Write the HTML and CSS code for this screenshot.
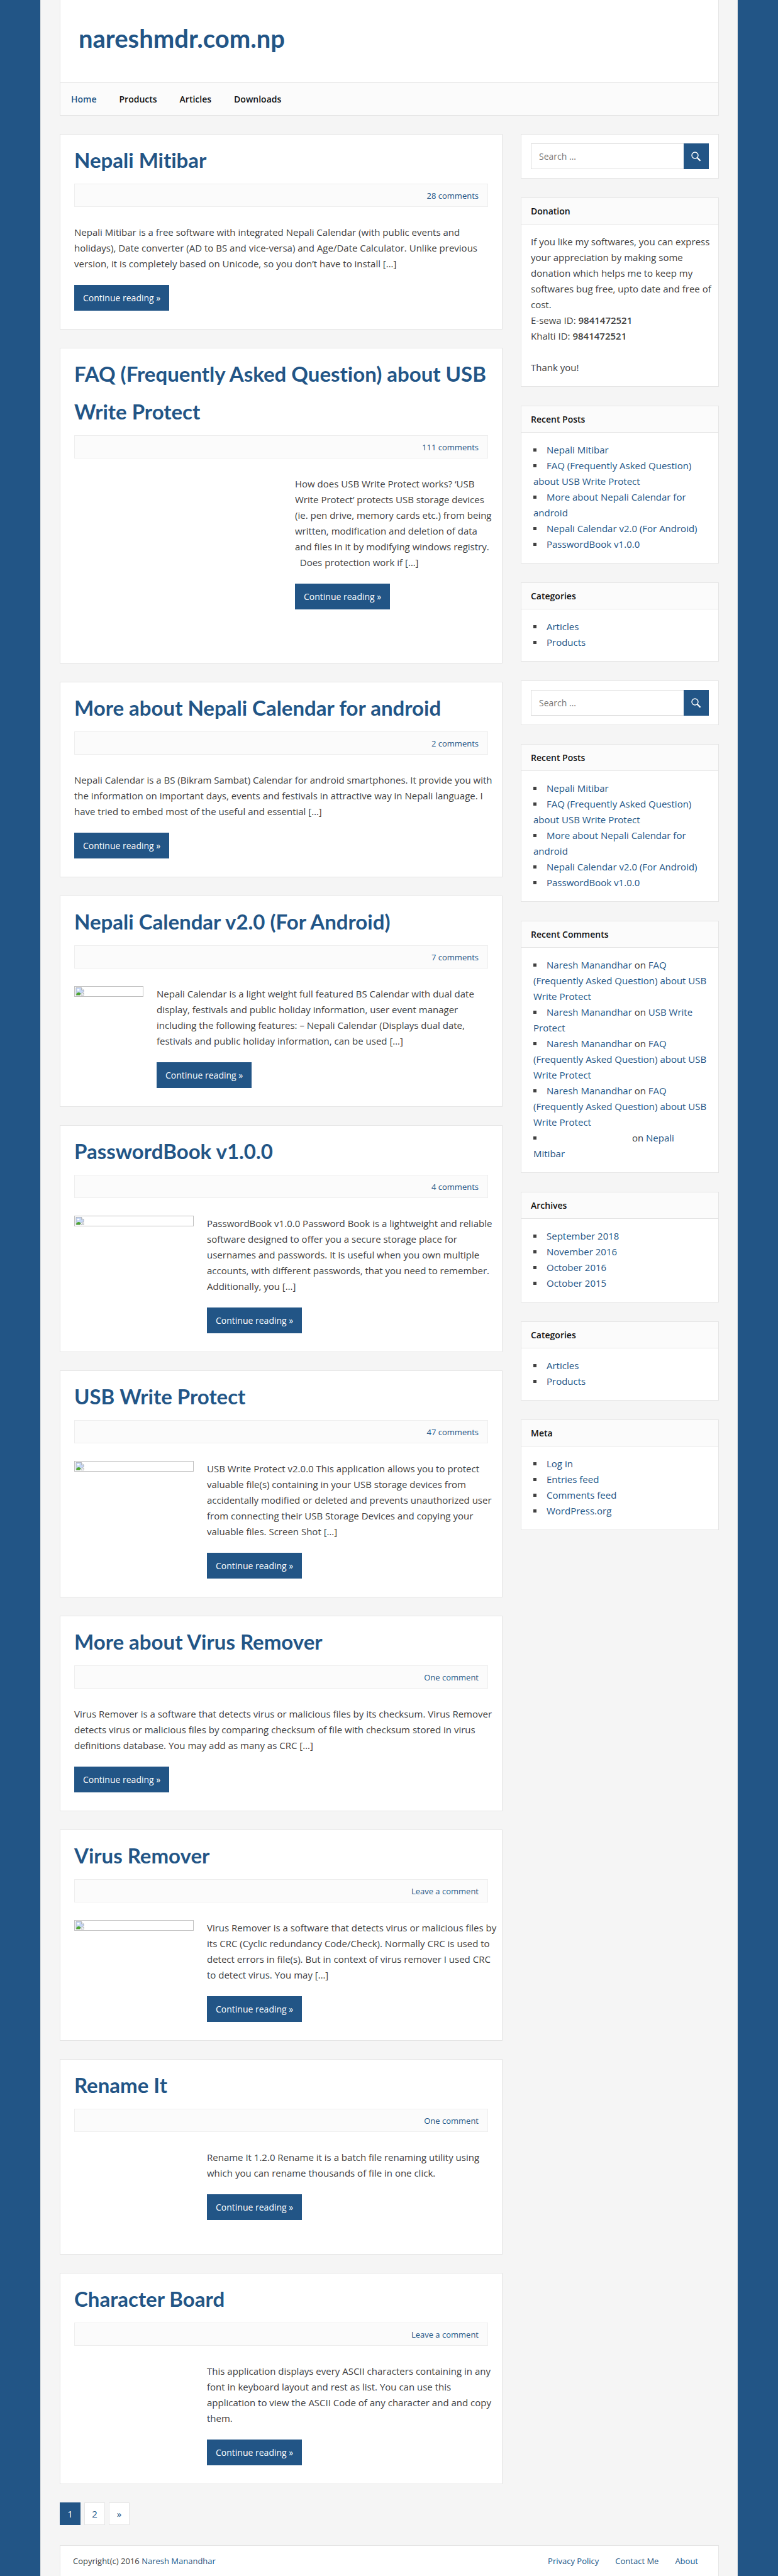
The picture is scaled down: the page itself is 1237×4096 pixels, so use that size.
FILE: index.html
```html
<!DOCTYPE html>
<html lang="en">
<head>
<meta charset="utf-8">
<meta name="viewport" content="width=device-width, initial-scale=1">
<title>nareshmdr.com.np</title>
<link rel="stylesheet" href="styles.css">
</head>
<body>
<svg class="sprite" aria-hidden="true">
  <symbol id="icon-search" viewBox="0 0 16 16">
    <circle cx="6" cy="6" r="5" fill="none" stroke="currentColor" stroke-width="1.4"/>
    <path d="M9.6 9.8 L14.6 14.8" fill="none" stroke="currentColor" stroke-width="2.2"/>
  </symbol>
  <symbol id="icon-broken" viewBox="0 0 16 16">
    <path d="M.5 .5H11L15.500 5V9L11 11.500L8 15.500H.5Z" fill="#c6d7f5" stroke="#a3a8ae"/>
    <path d="M11 .5V5H15.500" fill="#fff" stroke="#a3a8ae"/>
    <ellipse cx="5" cy="5" rx="2.500" ry="1.500" fill="#fff"/>
    <path d="M1 15V12.500Q5 8 9 11.500L10 12L7.800 15Z" fill="#4ea52f"/>
    <path d="M10 15.500L15.500 11V15.500Z" fill="#fff" stroke="#a3a8ae"/>
  </symbol>
</svg>
<div class="wrapper">
  <header class="header">
    <p class="site-title"><a href="#">nareshmdr.com.np</a></p>
    <nav class="nav">
      <a class="current" href="#">Home</a>
      <a href="#">Products</a>
      <a href="#">Articles</a>
      <a href="#">Downloads</a>
    </nav>
  </header>

  <div class="columns">
    <main class="main">
      <article class="card post">
        <h2><a href="#">Nepali Mitibar</a></h2>
        <p class="meta"><a href="#">28 comments</a></p>
        <div class="entry">
          <div class="excerpt">
            <p>Nepali Mitibar is a free software with integrated Nepali Calendar (with public events and<br>holidays), Date converter (AD to BS and vice-versa) and Age/Date Calculator. Unlike previous<br>version, it is completely based on Unicode, so you don’t have to install […]</p>
            <a class="more" href="#">Continue reading »</a>
          </div>
        </div>
      </article>

      <article class="card post">
        <h2><a href="#">FAQ (Frequently Asked Question) about USB<br>Write Protect</a></h2>
        <p class="meta"><a href="#">111 comments</a></p>
        <div class="entry">
          <div class="thumb large"></div>
          <div class="excerpt">
            <p>How does USB Write Protect works? ‘USB<br>Write Protect’ protects USB storage devices<br>(ie. pen drive, memory cards etc.) from being<br>written, modification and deletion of data<br>and files in it by modifying windows registry.<br>&nbsp; Does protection work if […]</p>
            <a class="more" href="#">Continue reading »</a>
          </div>
        </div>
      </article>

      <article class="card post">
        <h2><a href="#">More about Nepali Calendar for android</a></h2>
        <p class="meta"><a href="#">2 comments</a></p>
        <div class="entry">
          <div class="excerpt">
            <p>Nepali Calendar is a BS (Bikram Sambat) Calendar for android smartphones. It provide you with<br>the information on important days, events and festivals in attractive way in Nepali language. I<br>have tried to embed most of the useful and essential […]</p>
            <a class="more" href="#">Continue reading »</a>
          </div>
        </div>
      </article>

      <article class="card post">
        <h2><a href="#">Nepali Calendar v2.0 (For Android)</a></h2>
        <p class="meta"><a href="#">7 comments</a></p>
        <div class="entry">
          <div class="thumb small"><div class="missing"><svg><use href="#icon-broken"/></svg></div></div>
          <div class="excerpt">
            <p>Nepali Calendar is a light weight full featured BS Calendar with dual date<br>display, festivals and public holiday information, user event manager<br>including the following features: – Nepali Calendar (Displays dual date,<br>festivals and public holiday information, can be used […]</p>
            <a class="more" href="#">Continue reading »</a>
          </div>
        </div>
      </article>

      <article class="card post">
        <h2><a href="#">PasswordBook v1.0.0</a></h2>
        <p class="meta"><a href="#">4 comments</a></p>
        <div class="entry">
          <div class="thumb"><div class="missing"><svg><use href="#icon-broken"/></svg></div></div>
          <div class="excerpt">
            <p>PasswordBook v1.0.0 Password Book is a lightweight and reliable<br>software designed to offer you a secure storage place for<br>usernames and passwords. It is useful when you own multiple<br>accounts, with different passwords, that you need to remember.<br>Additionally, you […]</p>
            <a class="more" href="#">Continue reading »</a>
          </div>
        </div>
      </article>

      <article class="card post">
        <h2><a href="#">USB Write Protect</a></h2>
        <p class="meta"><a href="#">47 comments</a></p>
        <div class="entry">
          <div class="thumb"><div class="missing"><svg><use href="#icon-broken"/></svg></div></div>
          <div class="excerpt">
            <p>USB Write Protect v2.0.0 This application allows you to protect<br>valuable file(s) containing in your USB storage devices from<br>accidentally modified or deleted and prevents unauthorized user<br>from connecting their USB Storage Devices and copying your<br>valuable files. Screen Shot […]</p>
            <a class="more" href="#">Continue reading »</a>
          </div>
        </div>
      </article>

      <article class="card post">
        <h2><a href="#">More about Virus Remover</a></h2>
        <p class="meta"><a href="#">One comment</a></p>
        <div class="entry">
          <div class="excerpt">
            <p>Virus Remover is a software that detects virus or malicious files by its checksum. Virus Remover<br>detects virus or malicious files by comparing checksum of file with checksum stored in virus<br>definitions database. You may add as many as CRC […]</p>
            <a class="more" href="#">Continue reading »</a>
          </div>
        </div>
      </article>

      <article class="card post">
        <h2><a href="#">Virus Remover</a></h2>
        <p class="meta"><a href="#">Leave a comment</a></p>
        <div class="entry">
          <div class="thumb"><div class="missing"><svg><use href="#icon-broken"/></svg></div></div>
          <div class="excerpt">
            <p>Virus Remover is a software that detects virus or malicious files by<br>its CRC (Cyclic redundancy Code/Check). Normally CRC is used to<br>detect errors in file(s). But in context of virus remover I used CRC<br>to detect virus. You may […]</p>
            <a class="more" href="#">Continue reading »</a>
          </div>
        </div>
      </article>

      <article class="card post">
        <h2><a href="#">Rename It</a></h2>
        <p class="meta"><a href="#">One comment</a></p>
        <div class="entry">
          <div class="thumb blank"></div>
          <div class="excerpt">
            <p>Rename It 1.2.0 Rename it is a batch file renaming utility using<br>which you can rename thousands of file in one click.</p>
            <a class="more" href="#">Continue reading »</a>
          </div>
        </div>
      </article>

      <article class="card post">
        <h2><a href="#">Character Board</a></h2>
        <p class="meta"><a href="#">Leave a comment</a></p>
        <div class="entry">
          <div class="thumb blank"></div>
          <div class="excerpt">
            <p>This application displays every ASCII characters containing in any<br>font in keyboard layout and rest as list. You can use this<br>application to view the ASCII Code of any character and and copy<br>them.</p>
            <a class="more" href="#">Continue reading »</a>
          </div>
        </div>
      </article>

      <nav class="pagination" aria-label="Posts">
        <span class="page active">1</span>
        <a class="page" href="#">2</a>
        <a class="page" href="#">»</a>
      </nav>
    </main>

    <aside class="sidebar">
      <form class="card search">
        <input type="search" placeholder="Search …" aria-label="Search for">
        <button type="button" aria-label="Search"><svg><use href="#icon-search"/></svg></button>
      </form>
      <section class="card widget">
        <h3>Donation</h3>
        <p>If you like my softwares, you can express<br>your appreciation by making some<br>donation which helps me to keep my<br>softwares bug free, upto date and free of<br>cost.<br>E-sewa ID: <b>9841472521</b><br>Khalti ID: <b>9841472521</b><br><br>Thank you!</p>
      </section>
      <section class="card widget">
        <h3>Recent Posts</h3>
        <ul>
          <li><a href="#">Nepali Mitibar</a></li>
          <li><a href="#">FAQ (Frequently Asked Question)<br>about USB Write Protect</a></li>
          <li><a href="#">More about Nepali Calendar for<br>android</a></li>
          <li><a href="#">Nepali Calendar v2.0 (For Android)</a></li>
          <li><a href="#">PasswordBook v1.0.0</a></li>
        </ul>
      </section>
      <section class="card widget">
        <h3>Categories</h3>
        <ul>
          <li><a href="#">Articles</a></li>
          <li><a href="#">Products</a></li>
        </ul>
      </section>
      <form class="card search">
        <input type="search" placeholder="Search …" aria-label="Search for">
        <button type="button" aria-label="Search"><svg><use href="#icon-search"/></svg></button>
      </form>
      <section class="card widget">
        <h3>Recent Posts</h3>
        <ul>
          <li><a href="#">Nepali Mitibar</a></li>
          <li><a href="#">FAQ (Frequently Asked Question)<br>about USB Write Protect</a></li>
          <li><a href="#">More about Nepali Calendar for<br>android</a></li>
          <li><a href="#">Nepali Calendar v2.0 (For Android)</a></li>
          <li><a href="#">PasswordBook v1.0.0</a></li>
        </ul>
      </section>
      <section class="card widget">
        <h3>Recent Comments</h3>
        <ul>
          <li><a href="#">Naresh Manandhar</a> on <a href="#">FAQ<br>(Frequently Asked Question) about USB<br>Write Protect</a></li>
          <li><a href="#">Naresh Manandhar</a> on <a href="#">USB Write<br>Protect</a></li>
          <li><a href="#">Naresh Manandhar</a> on <a href="#">FAQ<br>(Frequently Asked Question) about USB<br>Write Protect</a></li>
          <li><a href="#">Naresh Manandhar</a> on <a href="#">FAQ<br>(Frequently Asked Question) about USB<br>Write Protect</a></li>
          <li><span class="no-author"></span> on <a href="#">Nepali<br>Mitibar</a></li>
        </ul>
      </section>
      <section class="card widget">
        <h3>Archives</h3>
        <ul>
          <li><a href="#">September 2018</a></li>
          <li><a href="#">November 2016</a></li>
          <li><a href="#">October 2016</a></li>
          <li><a href="#">October 2015</a></li>
        </ul>
      </section>
      <section class="card widget">
        <h3>Categories</h3>
        <ul>
          <li><a href="#">Articles</a></li>
          <li><a href="#">Products</a></li>
        </ul>
      </section>
      <section class="card widget">
        <h3>Meta</h3>
        <ul>
          <li><a href="#">Log in</a></li>
          <li><a href="#">Entries feed</a></li>
          <li><a href="#">Comments feed</a></li>
          <li><a href="#">WordPress.org</a></li>
        </ul>
      </section>
    </aside>
  </div>

  <footer class="footer">
    <p>Copyright(c) 2016 <a href="#">Naresh Manandhar</a></p>
    <nav class="footer-nav">
      <a href="#">Privacy Policy</a>
      <a href="#">Contact Me</a>
      <a href="#">About</a>
    </nav>
  </footer>
</div>
</body>
</html>
```
FILE: styles.css
```css
:root {
  --blue: #225586;
  --line: #e5e5e5;
  --pale: #fbfbfb;
  --text: #404040;
}

* { box-sizing: border-box; }

body {
  margin: 0;
  background: var(--blue);
  color: var(--text);
  font: 15px/25px "Open Sans", "Noto Sans", sans-serif;
}

h2, h3, p, ul { margin: 0; padding: 0; }
a { color: var(--blue); text-decoration: none; }
.sprite { display: none; }

.wrapper {
  max-width: 1109px;
  margin: 0 auto;
  padding: 0 29px 0 30px;
  background: #f5f5f5;
  border: solid var(--line);
  border-width: 0 1px;
}

.header {
  background: #fff;
  border: 1px solid var(--line);
  border-top: 0;
}
.site-title {
  padding: 31px 29px 40px;
  font: 700 40px/60px Lato, "Open Sans", sans-serif;
  font-variant-ligatures: none;
}
.nav {
  display: flex;
  gap: 36px;
  padding: 13px 17px;
  background: var(--pale);
  border-top: 1px solid var(--line);
  font-size: 14px;
  font-weight: 600;
}
.nav a { color: #111; }
.nav a.current { color: var(--blue); }

.columns {
  display: flex;
  align-items: flex-start;
  gap: 29px;
  margin-top: 29px;
}
.main {
  flex: 1;
  min-width: 0;
  display: flex;
  flex-direction: column;
  gap: 29px;
}
.sidebar {
  flex: none;
  width: 315px;
  display: flex;
  flex-direction: column;
  gap: 30px;
}
.card {
  background: #fff;
  border: 1px solid var(--line);
}

.post { padding: 10px 22px 29px; }
.post h2 {
  font: 700 33px/60px Lato, "Open Sans", sans-serif;
  font-variant-ligatures: none;
  white-space: nowrap;
}
.meta {
  margin-top: 8px;
  padding: 6px 14px 5px;
  background: var(--pale);
  border: 1px solid #eee;
  font-size: 13px;
  line-height: 24px;
  text-align: right;
}
.entry {
  display: flex;
  gap: 21px;
  margin-top: 28px;
}
.excerpt {
  flex: 1;
  min-width: 0;
  white-space: nowrap;
}
.more {
  display: inline-block;
  margin-top: 21px;
  padding: 8px 14px;
  background: var(--blue);
  color: #fff;
  font-size: 14px;
  vertical-align: top;
}
.thumb { width: 190px; }
.thumb.small { width: 110px; }
.thumb.large { width: 330px; min-height: 268px; }
.thumb.blank { min-height: 137px; }
.missing {
  height: 17px;
  padding: 1px;
  border: 1px solid #c0c0c0;
  line-height: 0;
}
.missing svg { width: 14px; height: 13px; }

.pagination {
  display: flex;
  gap: 6px;
}
.page {
  width: 33px;
  padding: 5px 0;
  background: #fff;
  border: 1px solid var(--line);
  line-height: 24px;
  text-align: center;
}
.page.active {
  background: var(--blue);
  border-color: var(--blue);
  color: #fff;
}

.search {
  display: flex;
  padding: 14px 15px;
}
.search input {
  flex: 1;
  min-width: 0;
  height: 41px;
  margin: 0;
  padding: 0 12px;
  border: 1px solid #ddd;
  border-right: 0;
  border-radius: 0;
  background: #fff;
  font: inherit;
  font-size: 14px;
  appearance: none;
}
.search input::placeholder { color: #757575; }
.search button {
  width: 40px;
  padding: 0;
  border: 0;
  background: var(--blue);
  color: #fff;
  line-height: 0;
}
.search svg { width: 16px; height: 16px; }

.widget h3 {
  padding: 8px 15px;
  background: var(--pale);
  border-bottom: 1px solid var(--line);
  color: #111;
  font-size: 14px;
  font-weight: 600;
  line-height: 25px;
}
.widget p, .widget ul { padding: 15px 15px 17px; white-space: nowrap; }
.widget ul { padding-left: 19px; list-style: none; }
.widget li::before {
  content: "";
  display: inline-block;
  width: 5px;
  height: 5px;
  margin-right: 16px;
  background: var(--text);
  vertical-align: 3px;
}
.widget b { font-weight: 600; }
.no-author { display: inline-block; width: 132px; }

.footer {
  display: flex;
  justify-content: space-between;
  margin-top: 32px;
  padding: 12px 32px 12px 20px;
  background: #fff;
  border: 1px solid var(--line);
  border-bottom: 0;
  font-size: 13px;
  line-height: 24px;
}
.footer-nav { display: flex; gap: 26px; }
```
